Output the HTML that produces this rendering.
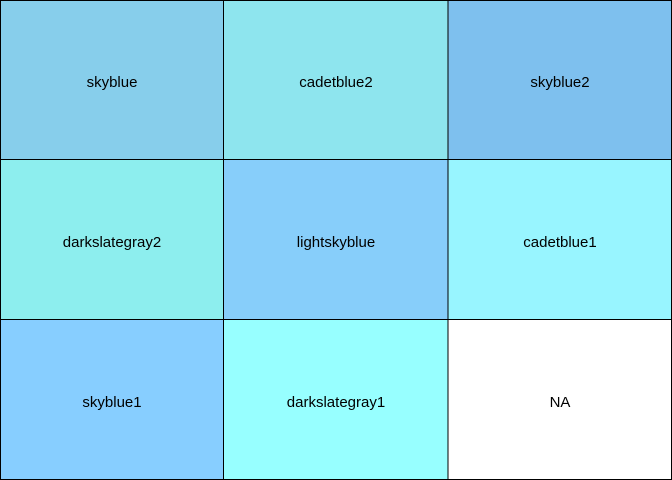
<!DOCTYPE html>
<html><head><style>html,body{margin:0;padding:0;background:#fff}svg{display:block}</style></head><body>
<svg width="672" height="480" xmlns="http://www.w3.org/2000/svg" font-family="Liberation Sans, Arial, sans-serif" font-size="15" text-anchor="middle">
<g stroke="#000" stroke-width="1">
<rect x="0.5" y="0.5" width="223" height="159" fill="#87CEEB"/>
<rect x="223.5" y="0.5" width="224.5" height="159" fill="#8EE5EE"/>
<rect x="448" y="0.5" width="223.5" height="159" fill="#7EC0EE"/>
<rect x="0.5" y="159.5" width="223" height="160" fill="#8DEEEE"/>
<rect x="223.5" y="159.5" width="224.5" height="160" fill="#87CEFA"/>
<rect x="448" y="159.5" width="223.5" height="160" fill="#98F5FF"/>
<rect x="0.5" y="319.5" width="223" height="160" fill="#87CEFF"/>
<rect x="223.5" y="319.5" width="224.5" height="160" fill="#97FFFF"/>
<rect x="448" y="319.5" width="223.5" height="160" fill="#FFFFFF"/>
</g>
<g fill="#000">
<text x="112" y="87">skyblue</text>
<text x="336" y="87">cadetblue2</text>
<text x="560" y="87">skyblue2</text>
<text x="112" y="247">darkslategray2</text>
<text x="336" y="247">lightskyblue</text>
<text x="560" y="247">cadetblue1</text>
<text x="112" y="407">skyblue1</text>
<text x="336" y="407">darkslategray1</text>
<text x="560" y="407">NA</text>
</g>
</svg>
</body></html>
